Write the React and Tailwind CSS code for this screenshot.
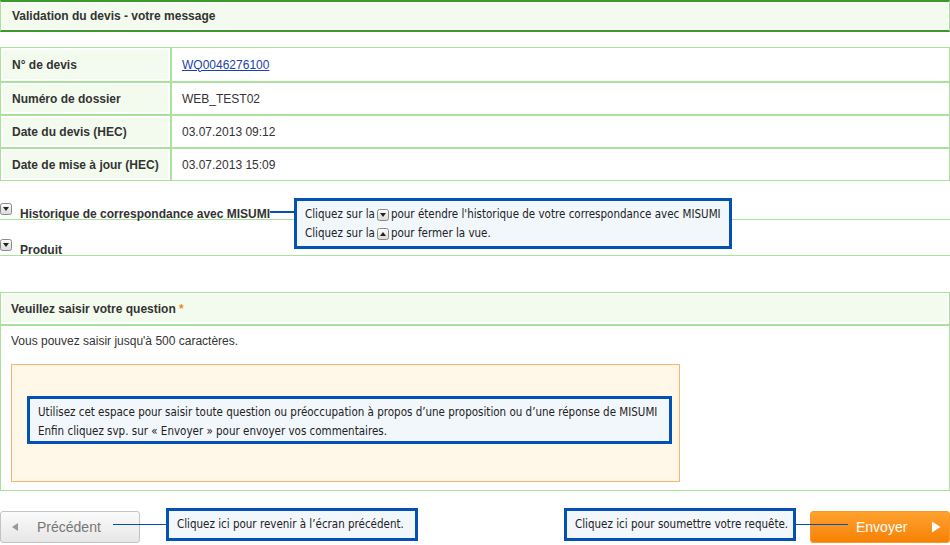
import React from "react";

function ToggleIcon({ up = false }) {
  return (
    <svg width="12" height="12" viewBox="0 0 12 12" className="shrink-0">
      <defs>
        <linearGradient id={up ? "tgu" : "tgd"} x1="0" y1="0" x2="0" y2="1">
          <stop offset="0" stopColor="#ffffff" />
          <stop offset="1" stopColor="#d9d9d9" />
        </linearGradient>
      </defs>
      <rect x="0.5" y="0.5" width="11" height="11" rx="2" fill={`url(#${up ? "tgu" : "tgd"})`} stroke="#8a8a8a" />
      {up ? <path d="M3 8 L6 4 L9 8 Z" fill="#222" /> : <path d="M3 4 L9 4 L6 8 Z" fill="#222" />}
    </svg>
  );
}

function Note({ className, children }) {
  return (
    <div
      className={`absolute whitespace-nowrap border-[3px] border-[#0451b5] bg-[#f2f7fc] px-[8px] text-[11.5px] leading-[19px] text-[#222] ${className}`}
      style={{ fontFamily: '"DejaVu Sans Condensed", "Liberation Sans", sans-serif' }}
    >
      {children}
    </div>
  );
}

const rows = [
  ["N° de devis", "WQ0046276100", true],
  ["Numéro de dossier", "WEB_TEST02"],
  ["Date du devis (HEC)", "03.07.2013 09:12"],
  ["Date de mise à jour (HEC)", "03.07.2013 15:09"],
];

export default function App() {
  return (
    <div
      className="relative h-[545px] w-[950px] overflow-hidden bg-white text-[12px] text-[#333]"
      style={{ fontFamily: '"Liberation Sans", Arial, sans-serif' }}
    >
      {/* page title */}
      <div className="h-[32px] border-y-2 border-x border-y-[#3b9a2b] border-x-[#a9e29a] bg-[#f3fbef] shadow-[inset_0_0_0_1px_#fff]">
        <div className="flex h-full items-center pl-[11px] font-bold">Validation du devis - votre message</div>
      </div>

      {/* quote info table */}
      <div className="mt-[15px] border border-[#a9e29a]">
        {rows.map(([label, value, link], i) => (
          <div key={label} className={`flex h-[33px] ${i > 0 ? "border-t-2 border-[#a9e29a]" : ""}`}>
            <div className="flex w-[171px] items-center border-r-2 border-[#a9e29a] bg-[#f3fbef] pl-[11px] font-bold shadow-[inset_0_0_0_2px_#fff]">
              {label}
            </div>
            <div className="flex items-center pl-[10px]">
              {link ? <a href="#" className="text-[#1c3fae] underline">{value}</a> : value}
            </div>
          </div>
        ))}
      </div>

      {/* collapsible sections */}
      <div className="mt-[19px] flex h-[20px] items-start gap-[8px] border-b border-[#a9e29a]">
        <div className="mt-[3px]"><ToggleIcon /></div>
        <span className="mt-[5px] font-bold">Historique de correspondance avec MISUMI</span>
      </div>
      <div className="mt-[16px] flex h-[20px] items-start gap-[8px] border-b border-[#a9e29a]">
        <div className="mt-[3px]"><ToggleIcon /></div>
        <span className="mt-[5px] font-bold">Produit</span>
      </div>

      {/* question box */}
      <div className="mt-[36px] h-[199px] border border-[#a9e29a]">
        <div className="flex h-[33px] items-center border-b-2 border-[#a9e29a] bg-[#f3fbef] pl-[10px] font-bold shadow-[inset_0_0_0_2px_#fff]">
          Veuillez saisir votre question&nbsp;<span className="text-[#f08a1c]">*</span>
        </div>
        <p className="mt-[6px] pl-[10px]">Vous pouvez saisir jusqu'à 500 caractères.</p>
        <div className="ml-[10px] mt-[14px] h-[118px] w-[669px] border border-[#fbb46a] bg-[#fff8e9]" />
      </div>

      {/* buttons */}
      <div className="mt-[20px] flex items-center justify-between">
        <button className="flex h-[32px] w-[140px] items-center rounded-[3px] border border-[#c3c3c3] bg-linear-to-b from-[#fbfbfb] to-[#e6e6e6] pl-[9px] text-[14px] text-[#777]">
          <svg width="10" height="10" viewBox="0 0 10 10"><path d="M8 1 L2 5 L8 9 Z" fill="#999" /></svg>
          <span className="ml-[17px]">Précédent</span>
        </button>
        <button className="flex h-[32px] w-[140px] items-center justify-between rounded-[3px] border border-[#f59a2a] bg-linear-to-b from-[#ffa22c] to-[#f68100] pl-[45px] pr-[8px] text-[14px] text-white">
          <span>Envoyer</span>
          <svg width="10" height="12" viewBox="0 0 10 12"><path d="M1 0.5 L9.5 6 L1 11.5 Z" fill="#fff" /></svg>
        </button>
      </div>

      {/* annotations */}
      <div className="absolute left-[270px] top-[211px] h-[2px] w-[25px] bg-[#0451b5]" />
      <Note className="left-[294px] top-[198px] w-[438px] h-[51px] pt-[4px] text-[11.2px]">
        <div className="flex items-center gap-[2px]">Cliquez sur la <ToggleIcon /> pour étendre l'historique de votre correspondance avec MISUMI</div>
        <div className="flex items-center gap-[2px]">Cliquez sur la <ToggleIcon up /> pour fermer la vue.</div>
      </Note>

      <Note className="left-[27px] top-[396px] w-[645px] h-[48px] pt-[4px]">
        <div>Utilisez cet espace pour saisir toute question ou préoccupation à propos d’une proposition ou d’une réponse de MISUMI</div>
        <div>Enfin cliquez svp. sur « Envoyer » pour envoyer vos commentaires.</div>
      </Note>

      <div className="absolute left-[113px] top-[524px] h-[1px] w-[54px] bg-[#0451b5]" />
      <Note className="left-[166px] top-[508px] w-[252px] h-[33px] pt-[4px]">Cliquez ici pour revenir à l’écran précédent.</Note>

      <div className="absolute left-[794px] top-[524px] h-[1px] w-[54px] bg-[#0451b5]" />
      <Note className="left-[564px] top-[508px] w-[232px] h-[33px] pt-[4px]">Cliquez ici pour soumettre votre requête.</Note>
    </div>
  );
}
